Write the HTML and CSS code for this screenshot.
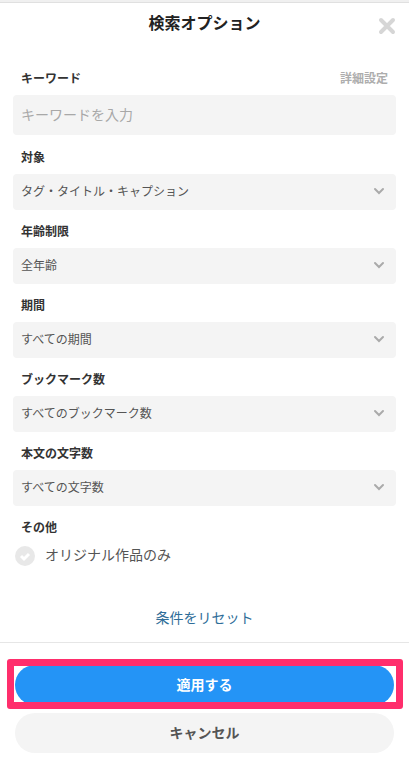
FILE: index.html
```html
<!DOCTYPE html>
<html lang="ja">
<head>
  <meta charset="UTF-8">
  <meta name="viewport" content="width=device-width, initial-scale=1">
  <title>検索オプション</title>
  <link rel="stylesheet" href="styles.css">
</head>
<body>
  <form class="modal">
    <header class="header">
      <h1>検索オプション</h1>
      <button type="button" class="close" aria-label="閉じる">
        <svg viewBox="0 0 18 18"><path d="M3 3l12 12M15 3L3 15"/></svg>
      </button>
    </header>

    <div class="options">
      <div class="field keyword">
        <div class="field-head">
          <label for="keyword">キーワード</label>
          <a href="#" class="detail">詳細設定</a>
        </div>
        <input type="text" id="keyword" placeholder="キーワードを入力">
      </div>

      <div class="field">
        <label for="target">対象</label>
        <div class="select">
          <select id="target"><option>タグ・タイトル・キャプション</option></select>
          <svg viewBox="0 0 12 8"><path d="M2 2l4 4 4-4"/></svg>
        </div>
      </div>

      <div class="field">
        <label for="age">年齢制限</label>
        <div class="select">
          <select id="age"><option>全年齢</option></select>
          <svg viewBox="0 0 12 8"><path d="M2 2l4 4 4-4"/></svg>
        </div>
      </div>

      <div class="field">
        <label for="period">期間</label>
        <div class="select">
          <select id="period"><option>すべての期間</option></select>
          <svg viewBox="0 0 12 8"><path d="M2 2l4 4 4-4"/></svg>
        </div>
      </div>

      <div class="field">
        <label for="bookmark">ブックマーク数</label>
        <div class="select">
          <select id="bookmark"><option>すべてのブックマーク数</option></select>
          <svg viewBox="0 0 12 8"><path d="M2 2l4 4 4-4"/></svg>
        </div>
      </div>

      <div class="field">
        <label for="length">本文の文字数</label>
        <div class="select">
          <select id="length"><option>すべての文字数</option></select>
          <svg viewBox="0 0 12 8"><path d="M2 2l4 4 4-4"/></svg>
        </div>
      </div>

      <fieldset class="others">
        <legend>その他</legend>
        <label class="check">
          <span class="check-mark">
            <input type="checkbox" name="original">
            <svg viewBox="0 0 20 20"><path d="M6 10l3 3 5-5"/></svg>
          </span>
          オリジナル作品のみ
        </label>
      </fieldset>

      <a href="#" class="reset">条件をリセット</a>
    </div>

    <footer class="actions">
      <div class="highlight">
        <button type="submit" class="apply">適用する</button>
      </div>
      <button type="button" class="cancel">キャンセル</button>
    </footer>
  </form>
</body>
</html>
```

FILE: styles.css
```css
* {
  box-sizing: border-box;
}
body {
  margin: 0;
  background: #fff;
  color: #333;
  font-family: "Noto Sans CJK JP", sans-serif;
  font-size: 12px;
  line-height: 18px;
}
button, input, select {
  border: none;
  font-family: inherit;
}
button {
  cursor: pointer;
}
a {
  text-decoration: none;
}
.modal {
  border-top: 2px solid #f0f0f0;
  box-shadow: inset 0 1px #e0e0e0;
}

/* Header */
.header {
  display: grid;
  grid-template-columns: 32px 1fr 32px;
  align-items: start;
  padding: 10px 6px 0;
}
.header h1 {
  grid-column: 2;
  margin: 0;
  color: #222;
  font-size: 16px;
  line-height: 20px;
  text-align: center;
}
.close {
  display: flex;
  align-items: center;
  justify-content: center;
  height: 28px;
  padding: 0;
  background: none;
}
.close svg {
  width: 18px;
  height: 18px;
  fill: none;
  stroke: #d6d6d6;
  stroke-width: 4;
  stroke-linecap: round;
}

/* Fields */
.options {
  padding: 29px 13px 15px;
}
.field {
  display: flex;
  flex-direction: column;
  gap: 8px;
  margin-bottom: 12px;
}
.keyword {
  margin-bottom: 13px;
}
.field label,
.others legend {
  padding: 0 8px;
  font-weight: bold;
}
.field-head {
  display: flex;
  justify-content: space-between;
}
.detail {
  padding: 0 8px;
  color: #adadad;
  font-weight: bold;
}
.field input {
  width: 100%;
  height: 40px;
  padding: 0 8px 3px;
  border-radius: 4px;
  background: #f4f4f4;
  color: #555;
  font-size: 14px;
}
.field input::placeholder {
  color: #a8a8a8;
}
.select {
  display: grid;
  align-items: center;
}
.select select,
.select svg {
  grid-area: 1 / 1;
}
.select select {
  appearance: none;
  width: 100%;
  height: 36px;
  padding: 0 32px 4px 8px;
  border-radius: 4px;
  background: #f4f4f4;
  color: #555;
  font-size: 12px;
}
.select svg {
  justify-self: end;
  width: 12px;
  height: 8px;
  margin: 0 11px 2px;
  fill: none;
  stroke: #aaa;
  stroke-width: 2;
  stroke-linecap: round;
  pointer-events: none;
}

/* Checkbox */
.others {
  margin: 0;
  padding: 0;
  border: none;
}
.check {
  display: flex;
  align-items: flex-start;
  gap: 10px;
  margin: 8px 2px 0;
  color: #555;
  font-size: 14px;
  line-height: 20px;
}
.check-mark {
  display: grid;
  margin-top: 2px;
}
.check-mark input,
.check-mark svg {
  grid-area: 1 / 1;
  width: 20px;
  height: 20px;
}
.check-mark input {
  appearance: none;
  margin: 0;
  border-radius: 50%;
  background: #e8e8e8;
}
.check-mark input:checked {
  background: #2196f7;
}
.check-mark svg {
  fill: none;
  stroke: #fff;
  stroke-width: 3;
  pointer-events: none;
}
.reset {
  display: block;
  width: fit-content;
  margin: 41px auto 0;
  color: #2e6d98;
  font-size: 14px;
  line-height: 20px;
}

/* Buttons */
.actions {
  display: flex;
  flex-direction: column;
  gap: 8px;
  padding: 22px 15px 21px;
  border-top: 1px solid #e6e6e6;
}
.actions button {
  width: 100%;
  height: 40px;
  padding: 0 0 3px;
  border-radius: 20px;
  font-size: 14px;
  font-weight: bold;
}
.apply {
  background: #2494f6;
  color: #fff;
}
.cancel {
  background: #f4f4f4;
  color: #555;
}
.highlight {
  position: relative;
}
.highlight button {
  display: block;
}
.highlight::after {
  content: "";
  position: absolute;
  inset: -6px -9px -4px -8px;
  border: 7px solid #ff2e6c;
  border-radius: 3px;
  pointer-events: none;
}
```
